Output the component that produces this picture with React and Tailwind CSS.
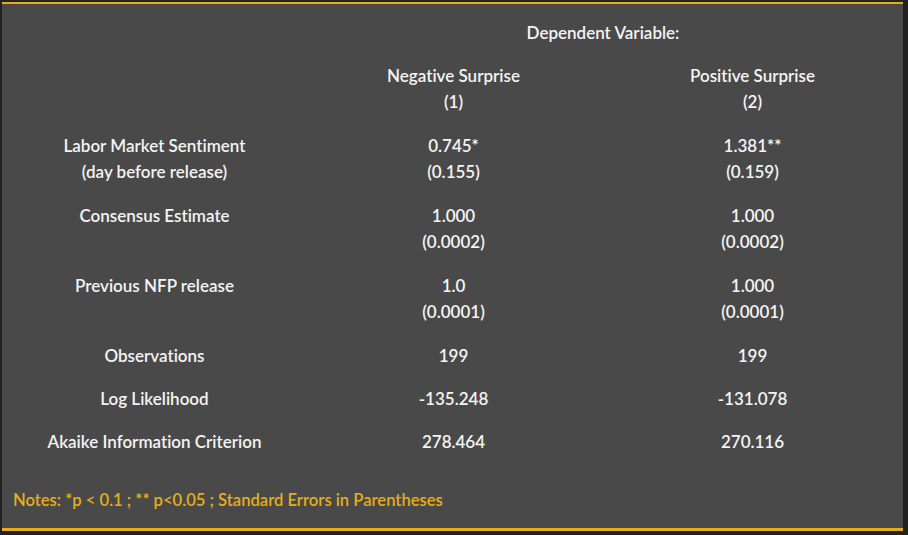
export default function App() {
  const rows = [
    { label: ["Labor Market Sentiment", "(day before release)"], a: ["0.745*", "(0.155)"], b: ["1.381**", "(0.159)"] },
    { label: ["Consensus Estimate"], a: ["1.000", "(0.0002)"], b: ["1.000", "(0.0002)"] },
    { label: ["Previous NFP release"], a: ["1.0", "(0.0001)"], b: ["1.000", "(0.0001)"] },
    { label: ["Observations"], a: ["199"], b: ["199"] },
    { label: ["Log Likelihood"], a: ["-135.248"], b: ["-131.078"] },
    { label: ["Akaike Information Criterion"], a: ["278.464"], b: ["270.116"] },
  ];
  const Cell = ({ lines }) => (
    <div className="flex flex-col items-center">
      {lines.map((l, i) => (
        <div key={i}>{l}</div>
      ))}
    </div>
  );
  return (
    <div className="w-[908px] h-[535px] bg-[#222222] pt-[2px] pl-[2px]" style={{ fontFamily: "Lato, 'Noto Sans', sans-serif" }}>
      <div className="w-[901px] h-[529px] bg-[#494949] border-t-[2px] border-b-[3px] border-[#e5ad1c] text-[#f4f4f4] text-[17px] font-semibold leading-[26px] pl-[3px] pt-[7px] [font-variant-ligatures:none]">
        <div className="grid grid-cols-[299px_598px] py-[8.5px]">
          <div></div>
          <div className="text-center">Dependent Variable:</div>
        </div>
        <div className="grid grid-cols-[299px_299px_299px] py-[9px]">
          <div></div>
          <Cell lines={["Negative Surprise", "(1)"]} />
          <Cell lines={["Positive Surprise", "(2)"]} />
        </div>
        {rows.map((r, i) => (
          <div
            key={i}
            className={
              "grid grid-cols-[299px_299px_299px] " +
              (r.a.length > 1 ? "py-[9px]" : "py-[8.5px]")
            }
          >
            <Cell lines={r.label} />
            <Cell lines={r.a} />
            <Cell lines={r.b} />
          </div>
        ))}
        <div className="mt-[24px] pl-[8px] text-[#e5ad1c] text-[16.6px]">
          Notes: *p &lt; 0.1 ; ** p&lt;0.05 ; Standard Errors in Parentheses
        </div>
      </div>
    </div>
  );
}
